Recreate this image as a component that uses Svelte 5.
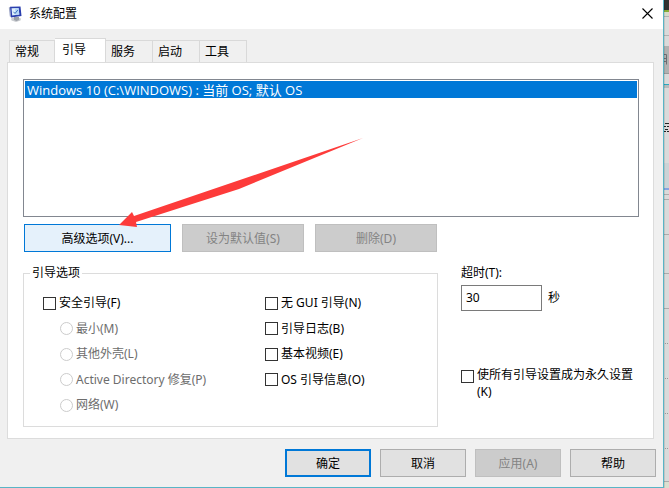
<script>
  const tabs = ['常规', '引导', '服务', '启动', '工具'];
  let active = $state('引导');
  let timeout = $state('30');

  const rows = [
    { left: '安全引导(F)', kind: 'checkbox', right: '无 GUI 引导(N)' },
    { left: '最小(M)', kind: 'radio', right: '引导日志(B)' },
    { left: '其他外壳(L)', kind: 'radio', right: '基本视频(E)' },
    { left: 'Active Directory 修复(P)', kind: 'radio', right: 'OS 引导信息(O)' },
    { left: '网络(W)', kind: 'radio', right: '' }
  ];
</script>

<div class="screen">
  <main class="window">
    <header class="titlebar">
      <svg class="app-icon" width="16" height="16" viewBox="0 0 16 16" aria-hidden="true">
        <path d="M3 12.500 8 11l5 1.500-.5 2L8 16l-4.500-1.500z" fill="#c9ccd0" />
        <path d="M6 11h5v3l-2.500 1L6 14z" fill="#9a9fa7" />
        <path d="M.8 1.500 2 1l1 10-1.200-.5z" fill="#9aa3c4" />
        <path d="M2 .8 12.500.5 13.500 10 3 11.500z" fill="#2b3fae" />
        <path d="M3.500 2.300 10.500 2l.8 6.500-7.100 1z" fill="#dff0fc" />
        <path d="M7 2.200 10.500 2l.8 6.500-3.800.5z" fill="#b5d6f7" />
        <path d="m5.500 5.800 1.500 1.700L9.800 4" fill="none" stroke="#3f74bd" stroke-width="1" />
      </svg>
      <h1>系统配置</h1>
      <button class="close" aria-label="关闭">
        <svg width="11" height="11" viewBox="0 0 11 11" aria-hidden="true">
          <path d="M.5.5l10 10M10.500.5l-10 10" stroke="#000" stroke-width="1.100" fill="none" />
        </svg>
      </button>
    </header>

    <div class="content">
      <div class="tabs" role="tablist">
        {#each tabs as tab}
          <button
            class="tab"
            class:active={tab === active}
            role="tab"
            aria-selected={tab === active}
            onclick={() => (active = tab)}>{tab}</button>
        {/each}
      </div>

      <section class="panel" role="tabpanel">
        <div class="list" role="listbox" aria-label="操作系统" tabindex="0">
          <div class="entry" role="option" aria-selected="true">Windows 10 (C:\WINDOWS) : 当前 OS; 默认 OS</div>
        </div>

        <div class="actions">
          <button class="btn hot">高级选项(V)...</button>
          <button class="btn" disabled>设为默认值(S)</button>
          <button class="btn" disabled>删除(D)</button>
        </div>

        <div class="settings">
          <fieldset>
            <legend>引导选项</legend>
            <div class="options">
              {#each rows as row}
                <label class:sub={row.kind === 'radio'}>
                  <input type={row.kind} name={row.kind === 'radio' ? 'safe-mode' : 'safe-boot'} disabled={row.kind === 'radio'} />
                  <span>{row.left}</span>
                </label>
                {#if row.right}
                  <label><input type="checkbox" /><span>{row.right}</span></label>
                {/if}
              {/each}
            </div>
          </fieldset>

          <div class="side">
            <label for="timeout">超时(T):</label>
            <div class="timeout">
              <input id="timeout" type="text" bind:value={timeout} />
              <span>秒</span>
            </div>
            <label class="permanent">
              <input type="checkbox" />
              <span>使所有引导设置成为永久设置 (K)</span>
            </label>
          </div>
        </div>

        <svg class="arrow" width="245" height="90" viewBox="0 0 245 90" aria-hidden="true">
          <path d="M0 87 13 74 15 78 112 45 244 0 120 51 17 84 18 89z" fill="#fd3b3a" />
        </svg>
      </section>
    </div>

    <footer>
      <button class="btn primary">确定</button>
      <button class="btn">取消</button>
      <button class="btn" disabled>应用(A)</button>
      <button class="btn">帮助</button>
    </footer>
  </main>

  <!-- Sliver of the window behind the dialog -->
  <svg class="behind" width="5" height="488" viewBox="0 0 5 488" aria-hidden="true">
    <rect width="5" height="488" fill="#dadada" />
    <rect width="5" height="10" fill="#2f3230" />
    <rect y="10" width="5" height="2" fill="#88ad38" />
    <rect y="12" width="5" height="4" fill="#d6dccb" />
    <rect y="16" width="5" height="1" fill="#b2b2b2" />
    <rect y="35" width="5" height="1" fill="#b2b2b2" />
    <rect y="46" width="5" height="27" fill="#b1b1b1" />
    <path d="M0 54.500h2.500v10M0 58.500h2.500M0 61.500h2.500" stroke="#6c6c72" fill="none" />
    <rect y="73" width="5" height="1" fill="#989898" />
    <rect y="84" width="5" height="1" fill="#2ba9c0" />
    <rect y="85" width="5" height="3" fill="#b5bcbd" />
    <path d="M1 123.500h4M0 126.500h2M3 126.500h2M1 129.500h3M0 131.500h2M3 131.500h2" stroke="#222" />
    <rect y="163" width="5" height="25" fill="#cbd3d6" />
    <rect y="188" width="5" height="2" fill="#86a4e2" />
    <path d="M0 194.500h5M0 199.500h5M0 234.500h5M0 273.500h5M0 308.500h5M0 481.500h5" stroke="#acacac" />
    <path d="M1 343.500h4M1 378.500h4M1 413.500h4M1 448.500h4" stroke="#999" stroke-dasharray="1 1" />
    <rect y="482" width="5" height="6" fill="#dcdfd0" />
    <rect width="1" height="488" fill="#000" opacity=".1" />
  </svg>
</div>

<style>
  :global(body) {
    margin: 0;
  }

  .screen,
  .screen * {
    box-sizing: border-box;
  }

  .screen {
    display: flex;
    min-height: 100vh;
    overflow: hidden;
    font: 12px/16px 'Noto Sans', 'Noto Sans CJK SC', sans-serif;
    color: #000;
  }

  button,
  input {
    font: inherit;
    color: inherit;
    margin: 0;
  }

  .window {
    flex: 1;
    display: flex;
    flex-direction: column;
    background: #f0f0f0;
    border: solid #58b5c6;
    border-width: 0 1px 1px 0;
  }

  .behind {
    flex: none;
  }

  .titlebar {
    display: flex;
    align-items: center;
    height: 29px;
    padding: 0 10px 2px 8px;
    background: #fff;
  }

  h1 {
    flex: 1;
    margin: 0 0 0 5px;
    font-size: 12px;
    line-height: 16px;
    font-weight: 400;
  }

  .close {
    display: flex;
    padding: 0;
    border: 0;
    background: none;
  }

  .content {
    flex: 1;
    display: flex;
    flex-direction: column;
    padding: 9px 9px 0 7px;
  }

  .tabs {
    display: flex;
    align-items: flex-end;
    padding-left: 2px;
  }

  .tab {
    height: 22px;
    padding: 0 17px 0 5px;
    border: 1px solid #d9d9d9;
    border-width: 1px 1px 0 0;
    background: #f0f0f0;
  }

  .tab:first-child {
    border-left-width: 1px;
    padding-right: 15px;
  }

  .tab.active {
    position: relative;
    height: 25px;
    margin-bottom: -1px;
    padding: 0 19px 3px 7px;
    background: #fff;
  }

  .panel {
    position: relative;
    flex: 1;
    padding: 16px 14px 10px 15px;
    border: 1px solid #dcdcdc;
    background: #fff;
  }

  .list {
    height: 138px;
    padding: 1px;
    border: 1px solid #828790;
    outline: none;
  }

  .entry {
    padding: 1px 2px 0;
    background: #0078d7;
    color: #fff;
    font-family: 'Open Sans', 'Noto Sans CJK SC', sans-serif;
    font-size: 13px;
  }

  .actions {
    display: flex;
    gap: 11px;
    padding: 7px 1px 0;
  }

  .btn {
    height: 28px;
    padding: 1px 0 0;
    border: 1px solid #adadad;
    background: #e1e1e1;
  }

  .btn:disabled {
    border-color: #bfbfbf;
    background: #ccc;
    color: #838383;
  }

  .btn.hot {
    border-color: #0078d7;
    background: #e5f1fb;
  }

  .btn.primary {
    border: 2px solid #0078d7;
  }

  .actions .btn {
    width: 122px;
  }

  .actions .btn.hot {
    width: 147px;
  }

  .settings {
    display: flex;
    gap: 23px;
    padding-top: 13px;
  }

  fieldset {
    flex: 1;
    min-width: 0;
    margin: 0;
    padding: 14px 19px 13px;
    border: 1px solid #dcdcdc;
  }

  legend {
    margin-left: -13px;
    padding: 0 2px;
  }

  .options {
    display: grid;
    grid-template-columns: 222px 1fr;
    align-content: space-between;
    height: 118px;
  }

  .options label,
  .permanent {
    display: flex;
    align-items: center;
    gap: 3px;
  }

  .options .sub {
    padding-left: 17px;
    color: #6d6d6d;
  }

  input[type='checkbox'],
  input[type='radio'] {
    appearance: none;
    flex: none;
    width: 13px;
    height: 13px;
    border: 1px solid #333;
    background: #fff;
  }

  input[type='radio'] {
    border-color: #ccc;
    border-radius: 50%;
  }

  input[type='checkbox']:checked {
    background: #333;
    box-shadow: inset 0 0 0 2px #fff;
  }

  .side {
    flex: none;
    width: 178px;
  }

  .timeout {
    display: flex;
    align-items: center;
    gap: 6px;
    margin: 4px 0 55px;
  }

  .timeout input {
    width: 81px;
    height: 26px;
    padding: 0 4px 2px;
    border: 1px solid #7a7a7a;
    background: #fff;
  }

  .permanent {
    align-items: flex-start;
    line-height: 17px;
  }

  .permanent input {
    margin-top: 4px;
  }

  .permanent span {
    max-width: 160px;
  }

  .arrow {
    position: absolute;
    left: 111px;
    top: 75px;
    pointer-events: none;
  }

  footer {
    display: flex;
    justify-content: flex-end;
    gap: 9px;
    padding: 10px 7px;
  }

  footer .btn {
    width: 86px;
  }
</style>
